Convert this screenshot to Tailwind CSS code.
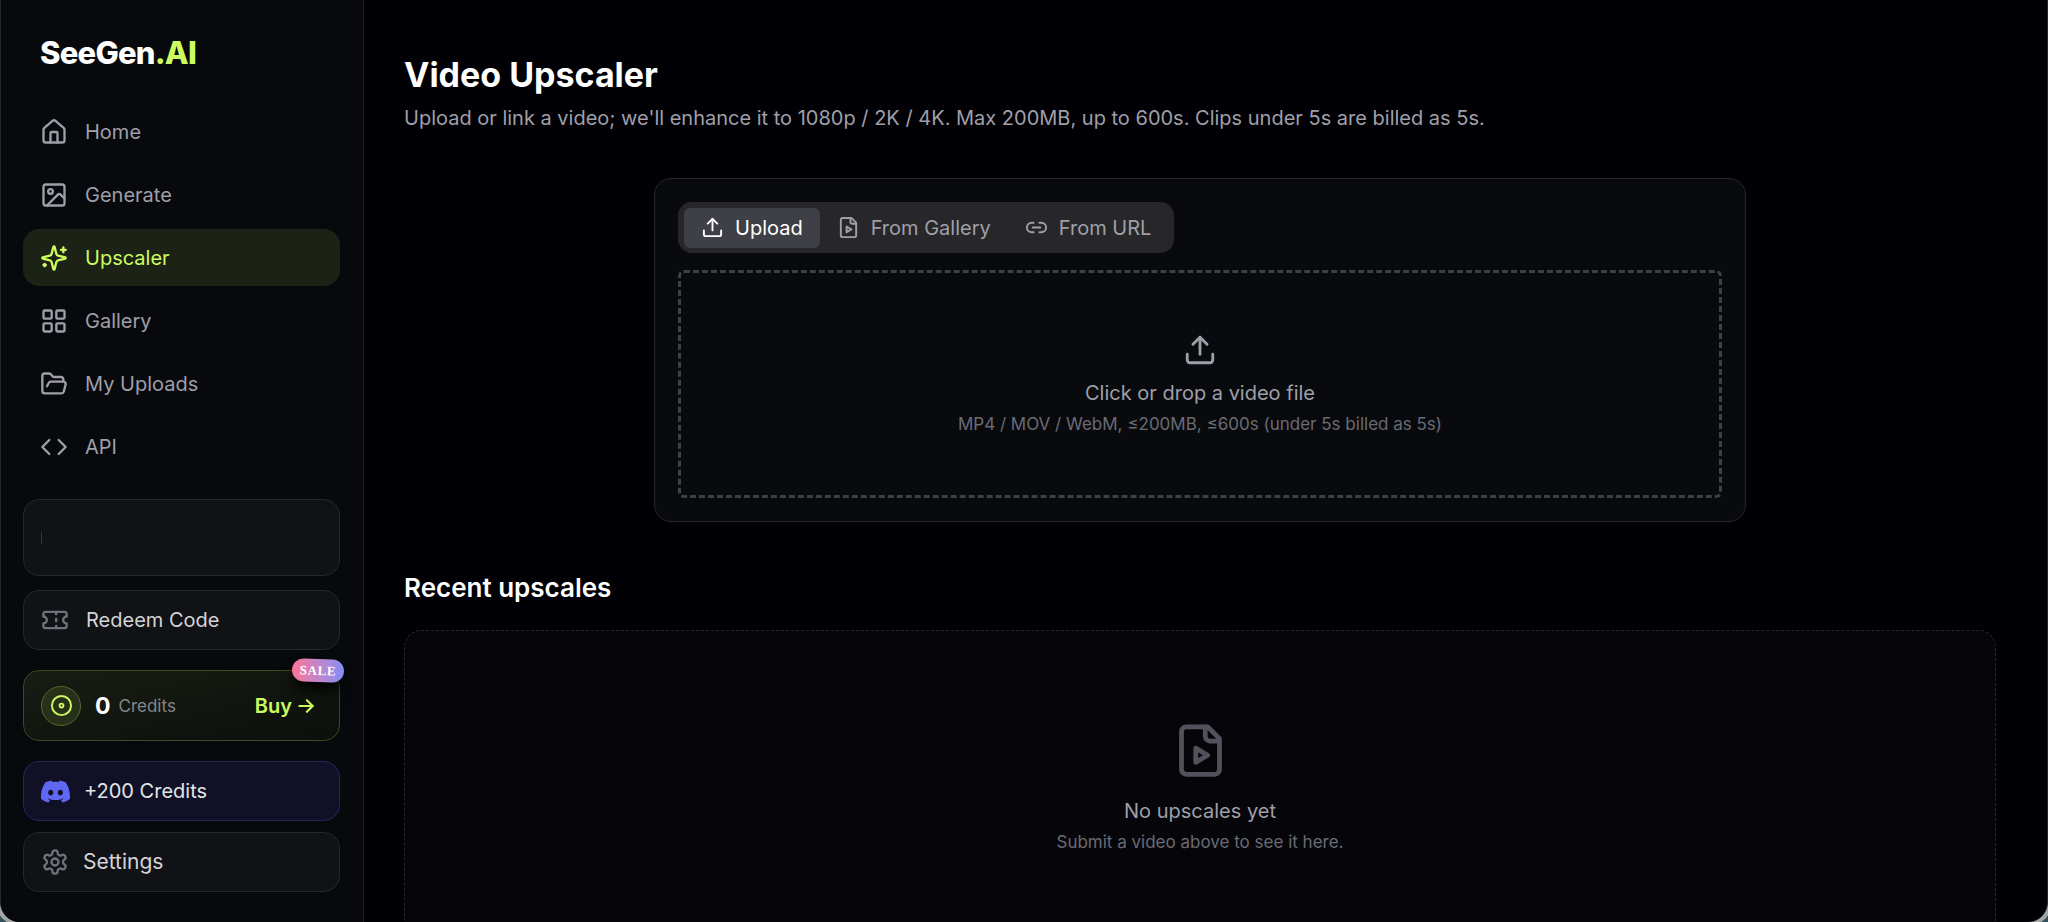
<!DOCTYPE html>
<html lang="en">
<head>
    <meta charset="UTF-8">
    <meta name="viewport" content="width=device-width, initial-scale=1.0">
    <title>Video Upscaler - SeeGen.AI</title>
    <script src="https://cdn.jsdelivr.net/npm/@tailwindcss/browser@4"></script>
</head>
<body class="bg-[#35505a] font-['Inter',sans-serif] text-[20px] leading-7 text-white h-screen overflow-hidden">

    <!-- Shared icons -->
    <svg class="hidden">
        <symbol id="icon-upload" viewBox="0 0 24 24"><path d="M12 3v12"/><path d="m17 8-5-5-5 5"/><path d="M21 15v4a2 2 0 0 1-2 2H5a2 2 0 0 1-2-2v-4"/></symbol>
        <symbol id="icon-file-play" viewBox="0 0 24 24"><path d="M15 2H6a2 2 0 0 0-2 2v16a2 2 0 0 0 2 2h12a2 2 0 0 0 2-2V7Z"/><path d="M14 2v4a2 2 0 0 0 2 2h4"/><path d="m10 11 5 3-5 3v-6Z"/></symbol>
    </svg>

    <div class="flex h-screen overflow-hidden rounded-b-[20px] border-x border-[#25272a] bg-[#010105] shadow-[0_0_0_4px_#a3a5a6]">

        <aside class="flex w-[363px] shrink-0 flex-col border-r border-[#1f2023] bg-[#08090d] pl-[22px] pr-[23px]">
            <a href="#" class="mt-[32px] pl-[17px] text-[31px] leading-[42px] font-extrabold tracking-tight">SeeGen<span class="text-[#cbfb5e]">.AI</span></a>

            <nav class="mt-[29px] flex flex-col gap-1.5 text-[#9f9fa9]">
                <a href="#" class="flex h-[57px] items-center gap-[17px] rounded-2xl px-[17px]">
                    <svg class="size-7" viewBox="0 0 24 24" fill="none" stroke="currentColor" stroke-width="2" stroke-linecap="round" stroke-linejoin="round"><path d="M15 21v-8a1 1 0 0 0-1-1h-4a1 1 0 0 0-1 1v8"/><path d="M3 10a2 2 0 0 1 .709-1.528l7-5.999a2 2 0 0 1 2.582 0l7 5.999A2 2 0 0 1 21 10v9a2 2 0 0 1-2 2H5a2 2 0 0 1-2-2z"/></svg>
                    Home
                </a>
                <a href="#" class="flex h-[57px] items-center gap-[17px] rounded-2xl px-[17px]">
                    <svg class="size-7" viewBox="0 0 24 24" fill="none" stroke="currentColor" stroke-width="2" stroke-linecap="round" stroke-linejoin="round"><rect width="18" height="18" x="3" y="3" rx="2"/><circle cx="9" cy="9" r="2"/><path d="m21 15-3.086-3.086a2 2 0 0 0-2.828 0L6 21"/></svg>
                    Generate
                </a>
                <a href="#" class="flex h-[57px] items-center gap-[17px] rounded-2xl bg-[#1d2217] px-[17px] text-[#cbfb5e]">
                    <svg class="size-7" viewBox="0 0 24 24" fill="none" stroke="currentColor" stroke-width="2" stroke-linecap="round" stroke-linejoin="round"><path d="M9.937 15.5A2 2 0 0 0 8.5 14.063l-6.135-1.582a.5.5 0 0 1 0-.962L8.5 9.936A2 2 0 0 0 9.937 8.5l1.582-6.135a.5.5 0 0 1 .963 0L14.063 8.5A2 2 0 0 0 15.5 9.937l6.135 1.581a.5.5 0 0 1 0 .964L15.5 14.063a2 2 0 0 0-1.437 1.437l-1.582 6.135a.5.5 0 0 1-.963 0z"/><path d="M20 3v4"/><path d="M22 5h-4"/><path d="M4 17v2"/><path d="M5 18H3"/></svg>
                    Upscaler
                </a>
                <a href="#" class="flex h-[57px] items-center gap-[17px] rounded-2xl px-[17px]">
                    <svg class="size-7" viewBox="0 0 24 24" fill="none" stroke="currentColor" stroke-width="2" stroke-linecap="round" stroke-linejoin="round"><rect width="7" height="7" x="3" y="3" rx="1"/><rect width="7" height="7" x="14" y="3" rx="1"/><rect width="7" height="7" x="14" y="14" rx="1"/><rect width="7" height="7" x="3" y="14" rx="1"/></svg>
                    Gallery
                </a>
                <a href="#" class="flex h-[57px] items-center gap-[17px] rounded-2xl px-[17px]">
                    <svg class="size-7" viewBox="0 0 24 24" fill="none" stroke="currentColor" stroke-width="2" stroke-linecap="round" stroke-linejoin="round"><path d="m6 14 1.5-2.9A2 2 0 0 1 9.24 10H20a2 2 0 0 1 1.94 2.5l-1.54 6a2 2 0 0 1-1.95 1.5H4a2 2 0 0 1-2-2V5a2 2 0 0 1 2-2h3.9a2 2 0 0 1 1.69.9l.81 1.2a2 2 0 0 0 1.67.9H18a2 2 0 0 1 2 2v2"/></svg>
                    My Uploads
                </a>
                <a href="#" class="flex h-[57px] items-center gap-[17px] rounded-2xl px-[17px]">
                    <svg class="size-7" viewBox="0 0 24 24" fill="none" stroke="currentColor" stroke-width="2" stroke-linecap="round" stroke-linejoin="round"><path d="m16 18 6-6-6-6"/><path d="m8 6-6 6 6 6"/></svg>
                    API
                </a>
            </nav>

            <!-- Account -->
            <div class="mt-6 flex h-[77px] shrink-0 items-center rounded-2xl border border-[#26272b] bg-[#111216] px-[17px]">
                <span class="h-3 w-px bg-[#34363a]"></span>
            </div>

            <button class="mt-3.5 flex h-[60px] shrink-0 items-center gap-[17px] rounded-2xl border border-[#26272b] bg-[#111216] px-[17px] text-[#d4d4d8]">
                <svg class="size-7 text-[#71717b]" viewBox="0 0 24 24" fill="none" stroke="currentColor" stroke-width="2" stroke-linecap="round" stroke-linejoin="round"><path d="M2 9a3 3 0 0 1 0 6v2a2 2 0 0 0 2 2h16a2 2 0 0 0 2-2v-2a3 3 0 0 1 0-6V7a2 2 0 0 0-2-2H4a2 2 0 0 0-2 2Z"/><path d="M13 5v2"/><path d="M13 17v2"/><path d="M13 11v2"/></svg>
                Redeem Code
            </button>

            <!-- Credits -->
            <div class="relative mt-5 flex h-[71px] shrink-0 items-center rounded-2xl border border-[#40481f] bg-linear-to-br from-[#181d13] to-[#0c0f0c] px-[17px]">
                <span class="flex size-10 items-center justify-center rounded-full border border-[#56672f] bg-[#283019]">
                    <svg class="size-[23px] text-[#cbfb5e]" viewBox="0 0 24 24" fill="none" stroke="currentColor" stroke-width="2"><circle cx="12" cy="12" r="10"/><circle cx="12" cy="12" r="2"/></svg>
                </span>
                <span class="ml-3.5 text-[23px] font-bold">0</span>
                <span class="ml-2 text-[17px] text-[#85868c]">Credits</span>
                <a href="#" class="ml-auto mr-1.5 flex items-center gap-1 font-semibold text-[#cbfb5e]">
                    Buy
                    <svg class="size-5" viewBox="0 0 24 24" fill="none" stroke="currentColor" stroke-width="2.5" stroke-linecap="round" stroke-linejoin="round"><path d="M4 12h16"/><path d="m13 5 7 7-7 7"/></svg>
                </a>
                <span class="absolute -top-3 -right-[5px] flex h-[23px] w-[52px] rotate-2 items-center justify-center rounded-full bg-linear-to-r from-[#fb7195] to-[#818cf8] font-['Liberation_Serif',serif] text-[13px] font-bold tracking-wider shadow-lg shadow-black">SALE</span>
            </div>

            <a href="#" class="mt-5 flex h-[60px] shrink-0 items-center gap-3.5 rounded-2xl border border-[#25275a] bg-[#101126] px-[17px] text-[#e4e4e7]">
                <svg class="size-[29px] text-[#5f68f2]" viewBox="0 0 24 24" fill="currentColor"><path d="M20.317 4.3698a19.7913 19.7913 0 00-4.8851-1.5152.0741.0741 0 00-.0785.0371c-.211.3753-.4447.8648-.6083 1.2495-1.8447-.2762-3.68-.2762-5.4868 0-.1636-.3933-.4058-.8742-.6177-1.2495a.077.077 0 00-.0785-.037 19.7363 19.7363 0 00-4.8852 1.515.0699.0699 0 00-.0321.0277C.5334 9.0458-.319 13.5799.0992 18.0578a.0824.0824 0 00.0312.0561c2.0528 1.5076 4.0413 2.4228 5.9929 3.0294a.0777.0777 0 00.0842-.0276c.4616-.6304.8731-1.2952 1.226-1.9942a.076.076 0 00-.0416-.1057c-.6528-.2476-1.2743-.5495-1.8722-.8923a.077.077 0 01-.0076-.1277c.1258-.0943.2517-.1923.3718-.2914a.0743.0743 0 01.0776-.0105c3.9278 1.7933 8.18 1.7933 12.0614 0a.0739.0739 0 01.0785.0095c.1202.099.246.1981.3728.2924a.077.077 0 01-.0066.1276 12.2986 12.2986 0 01-1.873.8914.0766.0766 0 00-.0407.1067c.3604.698.7719 1.3628 1.225 1.9932a.076.076 0 00.0842.0286c1.961-.6067 3.9495-1.5219 6.0023-3.0294a.077.077 0 00.0313-.0552c.5004-5.177-.8382-9.6739-3.5485-13.6604a.061.061 0 00-.0312-.0286zM8.02 15.3312c-1.1825 0-2.1569-1.0857-2.1569-2.419 0-1.3332.9555-2.4189 2.157-2.4189 1.2108 0 2.1757 1.0952 2.1568 2.419 0 1.3332-.9555 2.4189-2.1569 2.4189zm7.9748 0c-1.1825 0-2.1569-1.0857-2.1569-2.419 0-1.3332.9554-2.4189 2.1569-2.4189 1.2108 0 2.1757 1.0952 2.1568 2.419 0 1.3332-.946 2.4189-2.1568 2.4189Z"/></svg>
                +200 Credits
            </a>

            <a href="#" class="mt-[11px] flex h-[60px] shrink-0 items-center gap-3.5 rounded-2xl border border-[#26272b] bg-[#111216] px-[17px] text-[21px] text-[#d4d4d8]">
                <svg class="size-7 text-[#71717b]" viewBox="0 0 24 24" fill="none" stroke="currentColor" stroke-width="2" stroke-linecap="round" stroke-linejoin="round"><path d="M12.22 2h-.44a2 2 0 0 0-2 2v.18a2 2 0 0 1-1 1.73l-.43.25a2 2 0 0 1-2 0l-.15-.08a2 2 0 0 0-2.73.73l-.22.38a2 2 0 0 0 .73 2.73l.15.1a2 2 0 0 1 1 1.72v.51a2 2 0 0 1-1 1.74l-.15.09a2 2 0 0 0-.73 2.73l.22.38a2 2 0 0 0 2.73.73l.15-.08a2 2 0 0 1 2 0l.43.25a2 2 0 0 1 1 1.73V20a2 2 0 0 0 2 2h.44a2 2 0 0 0 2-2v-.18a2 2 0 0 1 1-1.73l.43-.25a2 2 0 0 1 2 0l.15.08a2 2 0 0 0 2.73-.73l.22-.39a2 2 0 0 0-.73-2.73l-.15-.08a2 2 0 0 1-1-1.74v-.5a2 2 0 0 1 1-1.74l.15-.09a2 2 0 0 0 .73-2.73l-.22-.38a2 2 0 0 0-2.73-.73l-.15.08a2 2 0 0 1-2 0l-.43-.25a2 2 0 0 1-1-1.73V4a2 2 0 0 0-2-2z"/><circle cx="12" cy="12" r="3"/></svg>
                Settings
            </a>
        </aside>

        <main class="min-w-0 flex-1 overflow-hidden pt-[53px] pl-10 pr-[51px]">
            <h1 class="text-[34px] leading-[44px] font-bold">Video Upscaler</h1>
            <p class="mt-[7px] text-[#9f9fa9]">Upload or link a video; we'll enhance it to 1080p / 2K / 4K. Max 200MB, up to 600s. Clips under 5s are billed as 5s.</p>

            <section class="mx-auto mt-[46px] max-w-[1092px] rounded-[17px] border border-[#25262a] bg-[#090a0e] p-[23px]">
                <div class="flex h-[51px] w-fit items-center rounded-[14px] bg-[#27272a] px-1.5 text-[#9f9fa9]" role="tablist">
                    <button role="tab" aria-selected="true" class="flex h-10 items-center gap-[11px] rounded-md bg-[#3f3f47] px-[17px] text-white">
                        <svg class="size-[23px]" fill="none" stroke="currentColor" stroke-width="2" stroke-linecap="round" stroke-linejoin="round"><use href="#icon-upload"/></svg>
                        Upload
                    </button>
                    <button role="tab" aria-selected="false" class="flex h-10 items-center gap-[11px] rounded-md px-[17px]">
                        <svg class="size-[23px]" fill="none" stroke="currentColor" stroke-width="2" stroke-linecap="round" stroke-linejoin="round"><use href="#icon-file-play"/></svg>
                        From Gallery
                    </button>
                    <button role="tab" aria-selected="false" class="flex h-10 items-center gap-[11px] rounded-md px-[17px]">
                        <svg class="size-[23px]" viewBox="0 0 24 24" fill="none" stroke="currentColor" stroke-width="2" stroke-linecap="round" stroke-linejoin="round"><path d="M9 17H7A5 5 0 0 1 7 7h2"/><path d="M15 7h2a5 5 0 1 1 0 10h-2"/><path d="M8 12h8"/></svg>
                        From URL
                    </button>
                </div>

                <button class="mt-[17px] flex h-[228px] w-full flex-col items-center justify-center rounded-md border-3 border-dashed border-[#3f3f46] text-[#9f9fa9]">
                    <svg class="size-[34px]" fill="none" stroke="currentColor" stroke-width="2" stroke-linecap="round" stroke-linejoin="round"><use href="#icon-upload"/></svg>
                    <span class="mt-3">Click or drop a video file</span>
                    <span class="mt-[5px] text-[17px] leading-6 text-[#6b6b74]">MP4 / MOV / WebM, ≤200MB, ≤600s (under 5s billed as 5s)</span>
                </button>
            </section>

            <h2 class="mt-12 text-[26px] leading-9 font-semibold">Recent upscales</h2>
            <div class="mt-6 flex flex-col items-center rounded-[17px] border border-dashed border-[#27272a] bg-[#06060a] py-[91px]">
                <svg class="size-[57px] text-[#52525c]" fill="none" stroke="currentColor" stroke-width="2" stroke-linecap="round" stroke-linejoin="round"><use href="#icon-file-play"/></svg>
                <p class="mt-[18px] text-[#9f9fa9]">No upscales yet</p>
                <p class="mt-[5px] text-[17px] leading-6 text-[#6b6b74]">Submit a video above to see it here.</p>
            </div>
        </main>
    </div>

</body>
</html>
